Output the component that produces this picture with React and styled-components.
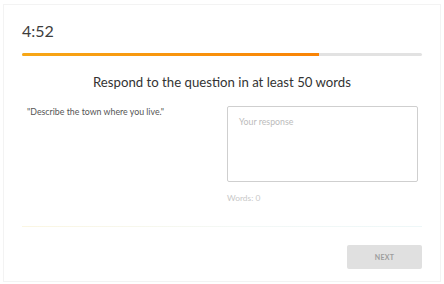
import styled, { createGlobalStyle } from "styled-components";

const Global = createGlobalStyle`
  html, body { margin: 0; padding: 0; background: #fff; }
  body { font-family: Lato, "Open Sans", sans-serif; }
`;

const Card = styled.div`
  box-sizing: border-box;
  width: 438px;
  height: 278px;
  margin: 4px 3px;
  border: 1px solid #f3f3f3;
  padding: 0 18px;
  display: flex;
  flex-direction: column;
`;

const Timer = styled.div`
  margin-top: 16px;
  font-size: 16px;
  color: #3d3d3d;
  line-height: 20px;
`;

const Track = styled.div`
  margin-top: 12px;
  height: 3px;
  border-radius: 2px;
  background: #e2e2e2;
  overflow: hidden;
`;

const Fill = styled.div`
  height: 100%;
  background: linear-gradient(90deg, #f7a716, #f98305);
`;

const Heading = styled.h1`
  margin: 17px 0 0;
  text-align: center;
  font-size: 13.2px;
  font-weight: 400;
  color: #333;
  line-height: 18px;
`;

const Body = styled.div`
  display: flex;
  margin-top: 15px;
  padding-left: 5px;
`;

const Question = styled.div`
  flex: 1;
  font-size: 8.8px;
  color: #555;
  line-height: 11px;
`;

const Answer = styled.div`
  width: 191px;
  margin-right: 4px;
  display: flex;
  flex-direction: column;
`;

const Response = styled.div`
  box-sizing: border-box;
  height: 76px;
  border: 1px solid #cfcfcf;
  border-radius: 2px;
  padding: 9px 11px;
  font-size: 8.8px;
  color: #bcbcbc;
`;

const Count = styled.div`
  margin-top: 11px;
  font-size: 8.4px;
  color: #c8c8c8;
`;

const Divider = styled.div`
  margin-top: 23px;
  height: 1px;
  background: linear-gradient(90deg, #fbf6e2, #f3f8f6 55%, #eef7f8);
`;

const Footer = styled.div`
  display: flex;
  justify-content: flex-end;
  margin-top: 18px;
`;

const NextButton = styled.button`
  width: 75px;
  height: 24px;
  border: none;
  border-radius: 2px;
  background: #e0e0e0;
  color: #9d9d9d;
  font-family: inherit;
  font-size: 7px;
  font-weight: 700;
  letter-spacing: 0.3px;
`;

export default function App() {
  const progress = 297 / 400;
  return (
    <>
      <Global />
      <Card>
        <Timer>4:52</Timer>
        <Track>
          <Fill style={{ width: `${progress * 100}%` }} />
        </Track>
        <Heading>Respond to the question in at least 50 words</Heading>
        <Body>
          <Question>"Describe the town where you live."</Question>
          <Answer>
            <Response>Your response</Response>
            <Count>Words: 0</Count>
          </Answer>
        </Body>
        <Divider />
        <Footer>
          <NextButton>NEXT</NextButton>
        </Footer>
      </Card>
    </>
  );
}
